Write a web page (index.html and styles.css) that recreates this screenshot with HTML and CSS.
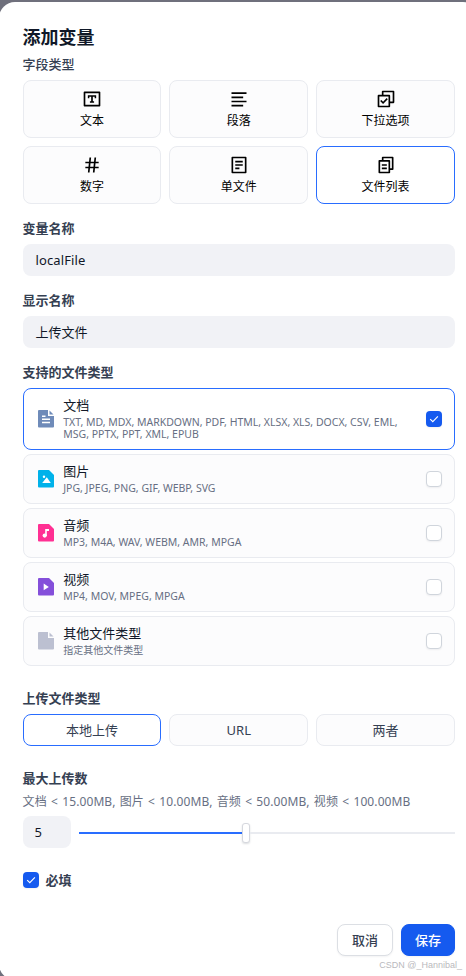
FILE: index.html
```html
<!DOCTYPE html>
<html lang="zh-CN">
<head>
<meta charset="utf-8">
<title>添加变量</title>
<link rel="stylesheet" href="styles.css">
</head>
<body>
<main class="modal">
  <h1 class="title">添加变量</h1>

  <section class="field field-first">
    <h2 class="label">字段类型</h2>
    <div class="grid types">
      <div class="type"><svg class="type-icon" viewBox="0 0 24 24"><path d="M3 3H21C21.55 3 22 3.45 22 4V20C22 20.55 21.55 21 21 21H3C2.45 21 2 20.55 2 20V4C2 3.45 2.45 3 3 3ZM4 5V19H20V5ZM7 7.5H17V11H15.2V9.3H13V14.7H14.5V16.5H9.5V14.7H11V9.3H8.8V11H7Z" fill-rule="evenodd"/></svg><span>文本</span></div>
      <div class="type"><svg class="type-icon" viewBox="0 0 24 24"><path d="M3 4H21V6H3ZM3 19H17V21H3ZM3 14H21V16H3ZM3 9H17V11H3Z"/></svg><span>段落</span></div>
      <div class="type"><svg class="type-icon" viewBox="0 0 24 24"><path d="M7 7V3C7 2.45 7.45 2 8 2H21C21.55 2 22 2.45 22 3V16C22 16.55 21.55 17 21 17H17V21C17 21.55 16.55 22 16 22H3C2.45 22 2 21.55 2 21V8C2 7.45 2.45 7 3 7ZM9 7H16C16.55 7 17 7.45 17 8V15H20V4H9ZM15 9H4V20H15ZM8.5 18L4.97 14.46L6.38 13.05L8.5 15.17L12.75 10.93L14.16 12.34Z" fill-rule="evenodd"/></svg><span>下拉选项</span></div>
      <div class="type"><svg class="type-icon" viewBox="0 0 24 24"><path d="M7.784 14L8.205 10H4V8H8.415L8.94 3H10.951L10.426 8H14.415L14.94 3H16.951L16.426 8H20V10H16.216L15.795 14H20V16H15.585L15.06 21H13.049L13.574 16H9.585L9.06 21H7.049L7.574 16H4V14ZM9.795 14H13.784L14.205 10H10.216Z" fill-rule="evenodd"/></svg><span>数字</span></div>
      <div class="type"><svg class="type-icon" viewBox="0 0 24 24"><path d="M4 2H20C20.55 2 21 2.45 21 3V21C21 21.55 20.55 22 20 22H4C3.45 22 3 21.55 3 21V3C3 2.45 3.45 2 4 2ZM5 4V20H19V4ZM7.5 7H16.5V9H7.5ZM7.5 11H16.5V13H7.5ZM7.5 15H12.5V17H7.5Z" fill-rule="evenodd"/></svg><span>单文件</span></div>
      <div class="type selected"><svg class="type-icon" viewBox="0 0 24 24"><path d="M7 6V3C7 2.45 7.45 2 8 2H20C20.55 2 21 2.45 21 3V17C21 17.55 20.55 18 20 18H17V21C17 21.55 16.55 22 16 22H4C3.45 22 3 21.55 3 21V7C3 6.45 3.45 6 4 6ZM9 6H16C16.55 6 17 6.45 17 7V16H19V4H9ZM5 8V20H15V8ZM7 11H13V13H7ZM7 15H13V17H7Z" fill-rule="evenodd"/></svg><span>文件列表</span></div>
    </div>
  </section>

  <section class="field">
    <h2 class="label">变量名称</h2>
    <div class="input latin">localFile</div>
  </section>

  <section class="field">
    <h2 class="label">显示名称</h2>
    <div class="input">上传文件</div>
  </section>

  <section class="field">
    <h2 class="label">支持的文件类型</h2>
    <div class="files">
      <div class="file selected tall">
        <svg class="file-icon" viewBox="0 0 16 18"><path d="M1 0H10V6H16V16.5Q16 17.5 15 17.5H1Q0 17.5 0 16.5V1Q0 0 1 0Z" fill="#6f8bb9"/><path d="M11.5 .5L15.5 4.5H11.5Z" fill="#6f8bb9"/><path d="M4 5.5H7.5V7H4ZM4 8.5H12V10H4ZM4 11.8H12V13.3H4Z" fill="#fff"/></svg>
        <div class="file-text"><div class="file-name">文档</div><div class="file-ext">TXT, MD, MDX, MARKDOWN, PDF, HTML, XLSX, XLS, DOCX, CSV, EML,<br>MSG, PPTX, PPT, XML, EPUB</div></div>
        <span class="check on"><svg viewBox="0 0 16 16"><path d="M4.2 8.1L6.8 10.7L11.9 5.4"/></svg></span>
      </div>
      <div class="file">
        <svg class="file-icon" viewBox="0 0 16 18"><path d="M1 0H11L16 5V16.5Q16 17.5 15 17.5H1Q0 17.5 0 16.5V1Q0 0 1 0Z" fill="#00b2ea"/><path d="M4.2 13L8.8 7.2L12.8 13Z" fill="#fff"/><circle cx="6" cy="6.8" r="1.2" fill="#fff"/></svg>
        <div class="file-text"><div class="file-name">图片</div><div class="file-ext">JPG, JPEG, PNG, GIF, WEBP, SVG</div></div>
        <span class="check"></span>
      </div>
      <div class="file">
        <svg class="file-icon" viewBox="0 0 16 18"><path d="M1 0H11L16 5V16.5Q16 17.5 15 17.5H1Q0 17.5 0 16.5V1Q0 0 1 0Z" fill="#ff3093"/><path d="M7.2 5H11V7H8.8V12H7.2Z" fill="#fff"/><circle cx="6.7" cy="11.6" r="2.1" fill="#fff"/></svg>
        <div class="file-text"><div class="file-name">音频</div><div class="file-ext">MP3, M4A, WAV, WEBM, AMR, MPGA</div></div>
        <span class="check"></span>
      </div>
      <div class="file">
        <svg class="file-icon" viewBox="0 0 16 18"><path d="M1 0H11L16 5V16.5Q16 17.5 15 17.5H1Q0 17.5 0 16.5V1Q0 0 1 0Z" fill="#844fda"/><path d="M5.7 5.5L10.8 8.9L5.7 12.3Z" fill="#fff"/></svg>
        <div class="file-text"><div class="file-name">视频</div><div class="file-ext">MP4, MOV, MPEG, MPGA</div></div>
        <span class="check"></span>
      </div>
      <div class="file">
        <svg class="file-icon" viewBox="0 0 16 18"><path d="M1 0H10V6H16V16.5Q16 17.5 15 17.5H1Q0 17.5 0 16.5V1Q0 0 1 0Z" fill="#bcc0d1"/><path d="M11.5 .5L15.5 4.5H11.5Z" fill="#bcc0d1"/></svg>
        <div class="file-text"><div class="file-name">其他文件类型</div><div class="file-ext cjk">指定其他文件类型</div></div>
        <span class="check"></span>
      </div>
    </div>
  </section>

  <section class="field spaced">
    <h2 class="label">上传文件类型</h2>
    <div class="grid">
      <div class="method selected">本地上传</div>
      <div class="method">URL</div>
      <div class="method">两者</div>
    </div>
  </section>

  <section class="field spaced">
    <h2 class="label">最大上传数</h2>
    <p class="hint">文档 &lt; 15.00MB, 图片 &lt; 10.00MB, 音频 &lt; 50.00MB, 视频 &lt; 100.00MB</p>
    <div class="limit">
      <div class="input count">5</div>
      <div class="slider"><span class="fill"></span><span class="thumb"></span><span class="rest"></span></div>
    </div>
  </section>

  <div class="required"><span class="check on"><svg viewBox="0 0 16 16"><path d="M4.2 8.1L6.8 10.7L11.9 5.4"/></svg></span><span class="required-text">必填</span></div>

  <footer class="actions">
    <button class="btn">取消</button>
    <button class="btn primary">保存</button>
  </footer>
</main>
<div class="watermark">CSDN @_Hannibal_</div>
</body>
</html>
```

FILE: styles.css
```css
* { box-sizing: border-box; }
html { background: #6f707c; }
body {
  margin: 0;
  height: 976px;
  overflow: hidden;
  padding-top: 2px;
  font-family: "Noto Sans", "Noto Sans CJK SC", sans-serif;
  font-size: 13px;
  color: #101828;
}
.modal {
  width: 480px;
  height: 978px;
  margin-left: -1.4px;
  padding: 21px 24px 0;
  border-radius: 16px;
  background: #fff;
}
.modal > * { width: 432.4px; }
.title { margin: 0; font-size: 18px; line-height: 28px; font-weight: 700; }
.field { margin-top: 12px; }
.field-first { margin-top: 1px; }
.spaced { margin-top: 20px; }
.label {
  margin: 0 0 4px;
  font-size: 13px;
  line-height: 24px;
  font-weight: 700;
  color: #354052;
}
.field-first .label { font-weight: 500; }
.grid { display: grid; grid-template-columns: repeat(3, 1fr); gap: 8px; }
.type, .method, .file {
  border: 1px solid #e9ebf0;
  border-radius: 8px;
  background: #fcfcfd;
}
.type {
  height: 58px;
  display: flex;
  flex-direction: column;
  align-items: center;
  padding-top: 8px;
  font-size: 12px;
  line-height: 18px;
  color: #000;
}
.type span { margin-top: 3px; }
.type-icon { width: 20px; height: 20px; }
.type.selected, .method.selected, .file.selected { border-color: #296dff; background: #fff; }
.input {
  height: 32px;
  padding: 0 12px 0 13px;
  border-radius: 8px;
  background: #f1f2f6;
  line-height: 32px;
}
.latin { letter-spacing: .1px; }
.files { display: flex; flex-direction: column; gap: 4px; }
.file {
  height: 50px;
  display: flex;
  align-items: center;
  padding: 0 12px 0 14px;
}
.tall { height: 62px; }
.file-icon { width: 16px; height: 18px; flex: none; }
.file-text { flex: 1; margin-left: 9.6px; white-space: nowrap; }
.file-name { line-height: 20px; }
.file-ext { font-size: 10.5px; line-height: 12px; margin-bottom: 4px; color: #676f83; }
.file-name + .file-ext { margin-top: 1px; }
.cjk { font-size: 10px; }
.check {
  width: 16px;
  height: 16px;
  flex: none;
  border: 1px solid #d0d5dc;
  border-radius: 4px;
  background: #fff;
  box-shadow: 0 1px 2px rgba(16, 24, 40, .06);
}
.check.on { border: 0; background: #155aef; }
.check svg { display: block; width: 16px; height: 16px; fill: none; stroke: #fff; stroke-width: 1.1; }
.method { height: 32px; line-height: 30px; text-align: center; color: #354052; }
.hint {
  margin: -4px 0 3px;
  font-size: 12px;
  line-height: 23px;
  letter-spacing: .1px;
  word-spacing: 1px;
  color: #676f83;
  white-space: nowrap;
}
.limit { display: flex; gap: 8px; }
.count { width: 48px; padding-left: 12px; }
.slider { flex: 1; display: flex; align-items: center; padding-top: 2px; }
.fill { width: 163px; height: 2px; background: #296dff; }
.thumb {
  width: 8px;
  height: 20px;
  border: 1px solid #d6d8de;
  border-radius: 3px;
  background: #fff;
  box-shadow: 0 1px 2px rgba(16, 24, 40, .15);
}
.rest { flex: 1; height: 2px; background: #e9ebf0; }
.required {
  display: flex;
  align-items: center;
  gap: 7px;
  height: 16px;
  margin-top: 24px;
  font-weight: 700;
  color: #354052;
}
.required-text { padding-bottom: 2px; }
.actions { display: flex; justify-content: flex-end; gap: 8px; margin-top: 36px; }
.btn {
  width: 56px;
  height: 32px;
  padding: 0 0 2px;
  border: 1px solid #dcdfe4;
  border-radius: 8px;
  background: #fff;
  box-shadow: 0 1px 2px rgba(16, 24, 40, .05);
  font: 500 13px "Noto Sans", "Noto Sans CJK SC", sans-serif;
  color: #354052;
}
.primary { width: 54px; border-color: #155aef; background: #155aef; color: #fff; }
.watermark {
  position: absolute;
  right: 4px;
  bottom: 5px;
  font: 9px/12px "Liberation Sans", sans-serif;
  color: #b9b9bd;
}
```
